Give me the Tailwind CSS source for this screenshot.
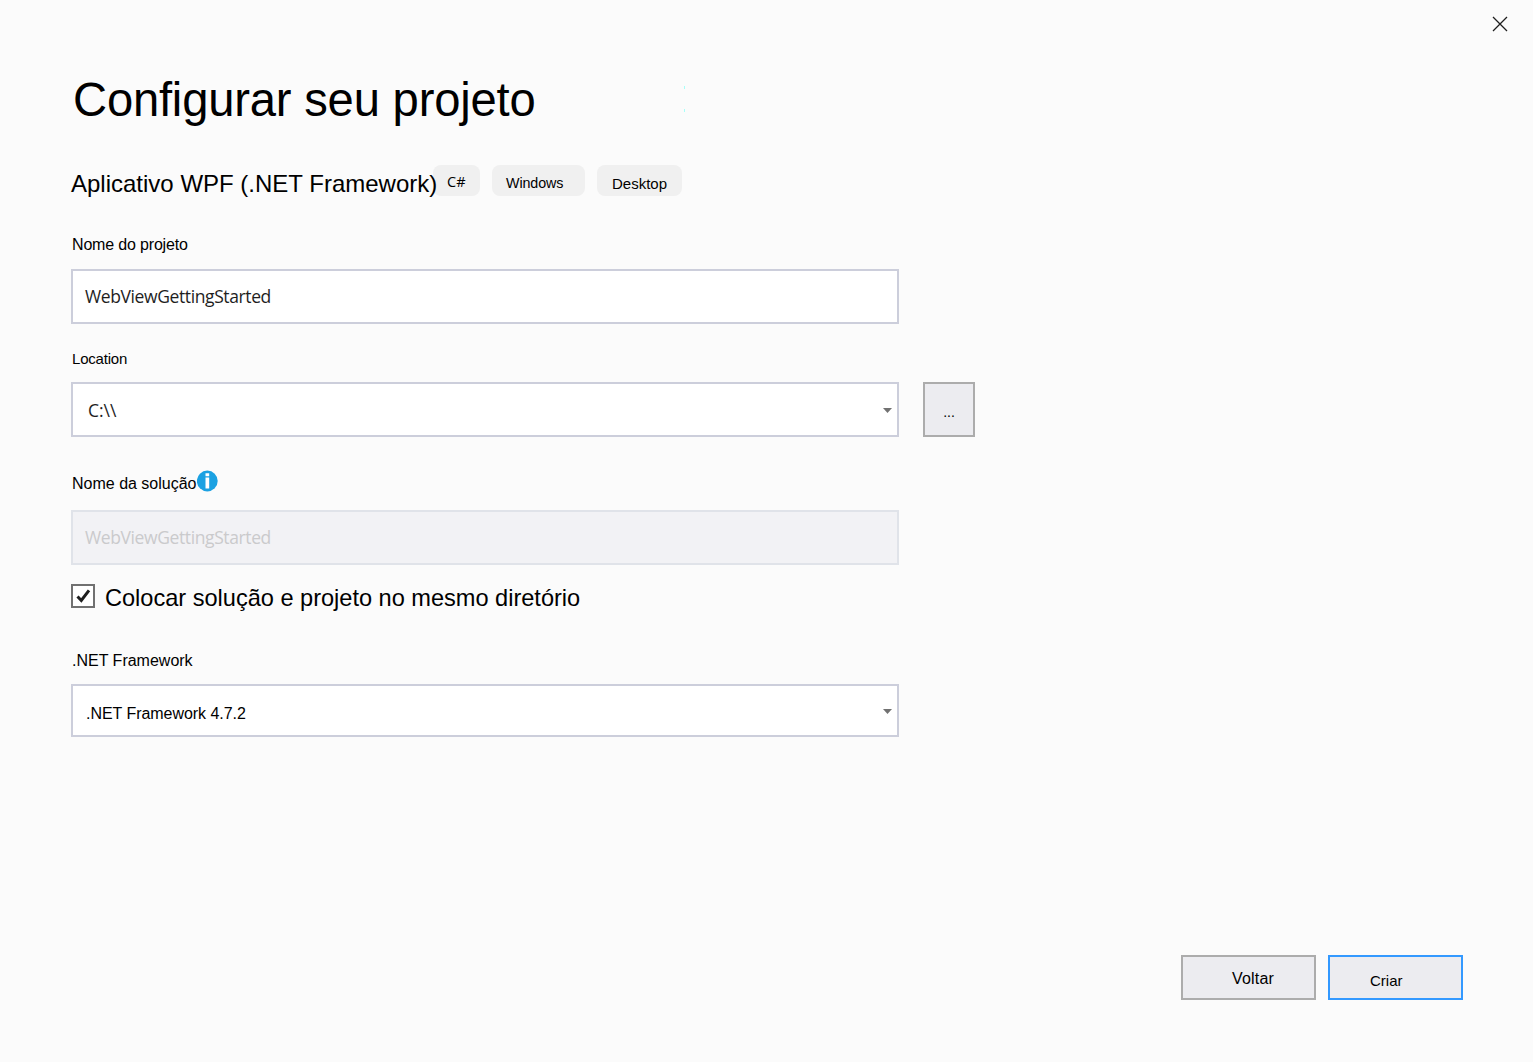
<!DOCTYPE html>
<html lang="pt-BR">
<head>
<meta charset="utf-8">
<title>Configurar seu projeto</title>
<script src="https://cdn.jsdelivr.net/npm/@tailwindcss/browser@4"></script>
</head>
<body class="relative flex h-[1062px] w-[1533px] flex-col overflow-hidden whitespace-nowrap bg-[#fbfbfb] font-['Liberation_Sans',Arial,sans-serif] text-black">
  <header class="flex h-[76px] shrink-0 justify-end pr-[25px] pt-4">
    <button class="h-4 w-4" aria-label="Fechar">
      <svg class="block" width="16" height="16" viewBox="0 0 16 16" stroke="#1e1e1e" stroke-width="1.3"><path d="M1 1l14 14M15 1L1 15"/></svg>
    </button>
  </header>

  <main class="flex flex-1 flex-col pl-[71px]">
    <h1 class="h-[89px] text-[47.2px] leading-[48px] pl-[2px] tracking-[-0.2px]">Configurar seu projeto</h1>

    <div class="flex h-[71px] items-start">
      <h2 class="relative z-10 w-[362px] pt-[7px] text-[24px] leading-[24px]">Aplicativo WPF (.NET Framework)</h2>
      <div class="flex gap-3">
        <span class="h-[31px] w-[47px] rounded-lg bg-[#f0f0f0] pl-[14px] pt-[9px] font-['Open_Sans',sans-serif] text-[14.5px] leading-[16px]">C#</span>
        <span class="h-[31px] w-[93px] rounded-lg bg-[#f0f0f0] pl-[14px] pt-[10px] text-[14.3px] leading-[16px] tracking-[-0.1px]">Windows</span>
        <span class="h-[31px] w-[85px] rounded-lg bg-[#f0f0f0] pl-[15px] pt-[11px] text-[15px] leading-[16px]">Desktop</span>
      </div>
    </div>

    <label class="h-[33px] pl-px pt-px text-[16px] leading-[16px] tracking-[-0.17px]">Nome do projeto</label>
    <div class="h-[55px] w-[828px] border-2 border-[#cccedb] bg-white pl-3 pt-[12px] font-['Open_Sans',sans-serif] text-[17.5px] leading-[26px] tracking-[-0.39px] text-[#1e1e1e]">WebViewGettingStarted</div>

    <label class="mt-[27px] h-[31px] pl-px text-[15px] leading-[16px] tracking-[-0.2px]">Location</label>
    <div class="flex gap-6">
      <div class="flex h-[55px] w-[828px] justify-between border-2 border-[#cccedb] bg-white pl-[15px] pr-[5px] pt-[13px]">
        <span class="font-['Open_Sans',sans-serif] text-[17.5px] leading-[26px] text-[#1e1e1e]">C:\\</span>
        <svg class="mt-[11px]" width="9" height="5" viewBox="0 0 9 5"><path d="M0 0h9L4.5 5z" fill="#717171"/></svg>
      </div>
      <button class="h-[55px] w-[52px] border-2 border-[#acacac] bg-[#ececf0] pt-[5px] text-center text-[14px] leading-[16px]">...</button>
    </div>

    <div class="mt-[33px] flex h-10 items-start pl-px">
      <label class="w-[125px] pt-[6px] text-[16px] leading-[16px]">Nome da solução</label>
      <svg width="21" height="22" viewBox="0 0 21 22"><circle cx="10.3" cy="11" r="10.4" fill="#1ba1e2"/><path d="M8.5 3.2h3.7v3H8.5zM8.5 7.5h3.7v11H8.5z" fill="#fff"/></svg>
    </div>
    <div class="h-[55px] w-[828px] border-2 border-[#e0e3e9] bg-[#f2f2f5] pl-3 pt-[12px] font-['Open_Sans',sans-serif] text-[17.5px] leading-[26px] tracking-[-0.39px] text-[#cacacc]">WebViewGettingStarted</div>

    <div class="mt-[19px] flex h-[68px] items-start gap-[10px]">
      <span class="h-6 w-6 border-2 border-[#717171] bg-white">
        <svg class="block" width="20" height="20" viewBox="0 0 20 20" fill="none" stroke="#1e1e1e" stroke-width="3"><path d="M4.5 10.5l3.8 4L16 4.3"/></svg>
      </span>
      <span class="pt-[2px] text-[23.6px] leading-[24px] tracking-[-0.02px]">Colocar solução e projeto no mesmo diretório</span>
    </div>

    <label class="h-8 pl-px pt-px text-[16px] leading-[16px]">.NET Framework</label>
    <div class="flex h-[53px] w-[828px] justify-between border-2 border-[#cccedb] bg-white pl-[13px] pr-[5px]">
      <span class="pt-[20px] text-[16px] leading-[16px] tracking-[-0.04px]">.NET Framework 4.7.2</span>
      <svg class="mt-[23px]" width="9" height="5" viewBox="0 0 9 5"><path d="M0 0h9L4.5 5z" fill="#717171"/></svg>
    </div>
  </main>

  <footer class="flex h-[107px] shrink-0 justify-end gap-3 pr-[70px]">
    <button class="flex h-[45px] w-[135px] border-2 border-[#acacac] bg-[#ececf0] pl-[49px] pt-[14px] text-[16px] leading-[16px] tracking-[0.2px]">Voltar</button>
    <button class="flex h-[45px] w-[135px] border-2 border-[#3399ff] bg-[#ececf0] pl-[40px] pt-[16px] text-[15px] leading-[16px]">Criar</button>
  </footer>

  <i class="absolute left-[684px] top-[86px] h-[3px] w-px bg-[#a8fff8]"></i>
  <i class="absolute left-[684px] top-[109px] h-[3px] w-px bg-[#a8fff8]"></i>
</body>
</html>
